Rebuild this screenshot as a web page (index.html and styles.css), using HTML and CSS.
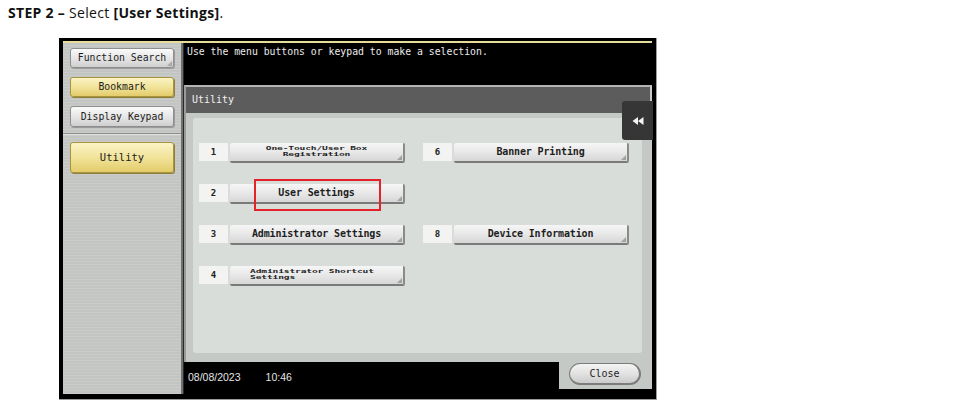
FILE: index.html
```html
<!DOCTYPE html>
<html lang="en">
<head>
<meta charset="utf-8">
<title>Step 2 - Select User Settings</title>
<link rel="stylesheet" href="styles.css">
</head>
<body>
<div class="page">
  <h1 class="step"><b>STEP 2 –</b> Select <b>[User Settings]</b>.</h1>
  <div class="screen">
    <div class="inner">
      <aside class="side">
        <button class="key gray corner">Function Search</button>
        <button class="key yellow">Bookmark</button>
        <button class="key gray">Display Keypad</button>
        <div class="sep"></div>
        <button class="key yellow big">Utility</button>
      </aside>
      <div class="divider"></div>
      <main class="main">
        <p class="msg">Use the menu buttons or keypad to make a selection.</p>
        <section class="win">
          <div class="title">Utility</div>
          <div class="body">
            <div class="panel">
              <div class="grid">
                <span class="num">1</span><button class="item small"><span class="sq">One-Touch/User Box<br>Registration</span></button>
                <span class="num">6</span><button class="item">Banner Printing</button>
                <span class="num">2</span><button class="item hl"><span class="lbl">User Settings</span></button>
                <span class="gap"></span><span class="gap"></span>
                <span class="num">3</span><button class="item">Administrator Settings</button>
                <span class="num">8</span><button class="item">Device Information</button>
                <span class="num">4</span><button class="item small left"><span class="sq">Administrator Shortcut<br>Settings</span></button>
              </div>
            </div>
          </div>
          <button class="back" aria-label="Back">
            <svg width="12" height="8" viewBox="0 0 12 8"><path d="M6 0 L0.5 4 L6 8 Z M11.5 0 L6 4 L11.5 8 Z" fill="#f4f4f4"/></svg>
          </button>
        </section>
        <footer class="status">
          <span class="date">08/08/2023</span>
          <span class="time">10:46</span>
          <div class="close-wrap"><button class="close">Close</button></div>
        </footer>
      </main>
    </div>
  </div>
</div>
</body>
</html>
```

FILE: styles.css
```css
* { box-sizing: border-box; }
html, body { margin: 0; padding: 0; background: #fff; }
.page { width: 961px; height: 406px; overflow: hidden; }

.step {
  margin: 0;
  padding: 4px 0 0 8px;
  height: 38px;
  font-family: "Open Sans", "Noto Sans", sans-serif;
  font-size: 14px;
  line-height: 18px;
  font-weight: 400;
  color: #111;
  letter-spacing: 0.3px;
}
.step b { font-weight: 700; }

.screen {
  margin-left: 59px;
  width: 598px;
  height: 362px;
  background: #000;
  padding: 3px 4px 5px 4px;
  border-right: 1px solid #9c9c9c;
  border-bottom: 1px solid #9c9c9c;
}
.inner {
  display: flex;
  height: 100%;
  border-top: 2px solid #e6dc9c;
}

button { font: inherit; color: inherit; padding: 0; margin: 0; cursor: default; }

.side {
  width: 118px;
  flex: none;
  display: flex;
  flex-direction: column;
  padding: 5px 7px 0 7px;
  background: repeating-linear-gradient(180deg, #c3c5c3 0 2px, #cacccA 2px 3px);
  font-family: "DejaVu Sans Mono", "Liberation Mono", monospace;
  font-size: 9.8px;
}
.key {
  position: relative;
  height: 20px;
  border-radius: 3px;
  color: #1c1c1c;
  font-family: "DejaVu Sans Mono", monospace;
  font-size: 9.8px;
  line-height: 18px;
  text-align: center;
}
.key.gray {
  background: linear-gradient(180deg, #fafafa 0%, #e4e4e4 55%, #cfcfcf 100%);
  border: 1px solid #8e8e8e;
  box-shadow: 1px 1px 0 #9a9a9a;
}
.key.yellow {
  background: linear-gradient(180deg, #fbf3c4 0%, #f1e39a 50%, #e3cc6a 100%);
  border: 1px solid #a8943e;
  box-shadow: 1px 1px 0 #8f7f3a;
}
.key + .key { margin-top: 9px; }
.key.gray:nth-child(3) { height: 21px; }
.key.corner::after {
  content: "";
  position: absolute;
  right: 1px;
  bottom: 1px;
  border-style: solid;
  border-width: 0 0 5px 5px;
  border-color: transparent transparent #a8a8a8 transparent;
}
.sep {
  height: 2px;
  margin: 6px -7px 7px -7px;
  background: #8c8c8c;
  border-bottom: 1px solid #e0e0e0;
}
.key.big { height: 31px; line-height: 29px; font-size: 10.5px; }

.divider {
  width: 3px;
  flex: none;
  background: #707070;
  border-right: 1px solid #2a2a2a;
}

.main {
  flex: 1;
  display: flex;
  flex-direction: column;
  background: #000;
}
.msg {
  margin: 0;
  height: 42px;
  padding: 2px 0 0 3px;
  color: #ececec;
  font-family: "DejaVu Sans Mono", "Liberation Mono", monospace;
  font-size: 9.8px;
  line-height: 13px;
}

.win {
  position: relative;
  height: 277px;
  flex: none;
  border-top: 2px solid #b4b4b4;
  border-left: 2px solid #9a9a9a;
  border-right: 2px solid #c8c8c8;
  display: flex;
  flex-direction: column;
}
.title {
  height: 26px;
  background: #5c5c5c;
  color: #f0f0f0;
  padding-left: 6px;
  font-family: "DejaVu Sans Mono", monospace;
  font-size: 10px;
  line-height: 26px;
}
.body {
  flex: 1;
  background: #c5c9c5;
  padding: 5px 8px 9px 7px;
}
.panel {
  height: 100%;
  background: #d9ddd9;
  border-radius: 3px;
  padding: 25px 0 0 6px;
}
.grid {
  display: grid;
  grid-template-columns: 29px 175px 29px 175px;
  grid-auto-rows: 20px;
  column-gap: 2px;
  row-gap: 21px;
}
.num {
  height: 18px;
  background: #f3f3f1;
  font-family: "DejaVu Sans Mono", monospace;
  font-size: 9px;
  font-weight: 700;
  line-height: 18px;
  text-align: center;
  color: #222;
}
.grid > .num:nth-child(4n+3) { width: 29px; margin-left: 16px; }
.item {
  position: relative;
  height: 20px;
  border: none;
  border-radius: 2px;
  background: linear-gradient(180deg, #f6f6f6 0%, #e8e8e8 50%, #d6d6d6 100%);
  border-right: 2px solid #8a8a8a;
  border-bottom: 2px solid #7a7a7a;
  color: #1e1e1e;
  font-family: "DejaVu Sans Mono", monospace;
  font-size: 10px;
  font-weight: 700;
  line-height: 18px;
  text-align: center;
  letter-spacing: -0.15px;
}
.grid > .item:nth-child(4n+4) { margin-left: 16px; width: 175px; }
.item::after {
  content: "";
  position: absolute;
  right: 1px;
  bottom: 1px;
  border-style: solid;
  border-width: 0 0 5px 5px;
  border-color: transparent transparent #a2a2a2 transparent;
}
.item.small { overflow: visible; }
.item .sq {
  display: inline-block;
  font-size: 9.6px;
  line-height: 9px;
  transform: scaleY(0.62);
  transform-origin: 50% 50%;
  margin-top: -2px;
  vertical-align: middle;
}
.item.small.left { text-align: left; padding-left: 20px; }
.gap { display: block; }
.hl .lbl { display: inline-block; }
.hl::before {
  content: "";
  position: absolute;
  left: 24px;
  top: -5px;
  width: 123px;
  height: 28px;
  border: 2px solid #e3222a;
}

.back {
  position: absolute;
  top: 14px;
  right: -3px;
  width: 31px;
  height: 39px;
  border: none;
  border-radius: 3px 0 0 3px;
  background: #353635;
  display: flex;
  align-items: center;
  justify-content: center;
}

.status {
  flex: 1;
  display: flex;
  align-items: flex-start;
  color: #e4e4e4;
  font-family: "Liberation Sans", Arial, sans-serif;
  font-size: 10.5px;
}
.date { margin: 9px 0 0 4px; }
.time { margin: 9px 0 0 25px; }
.close-wrap {
  margin-left: auto;
  width: 93px;
  height: 27px;
  background: #c5c9c5;
  padding: 1px 10px 0 10px;
  border-right: 2px solid #c8c8c8;
}
.close {
  width: 72px;
  height: 22px;
  border: 1px solid #7c7c7c;
  border-right-width: 2px;
  border-bottom-width: 2px;
  border-radius: 11px;
  background: linear-gradient(180deg, #f4f4f4 0%, #e2e2e2 50%, #cbcbcb 100%);
  color: #1e1e1e;
  font-family: "DejaVu Sans Mono", monospace;
  font-size: 10px;
  line-height: 18px;
}
```
